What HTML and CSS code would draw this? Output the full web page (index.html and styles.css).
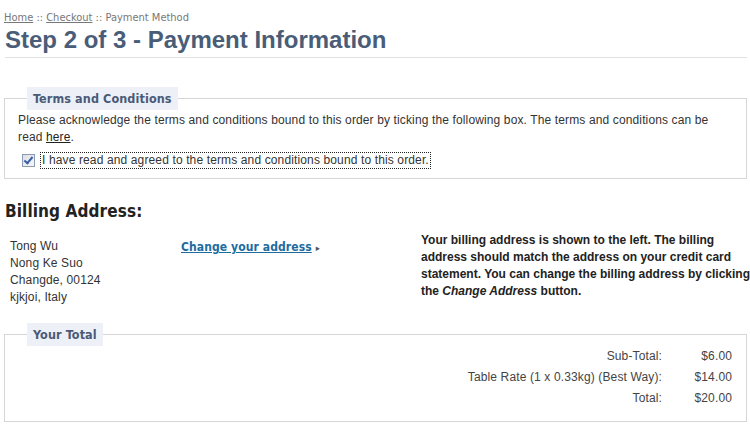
FILE: index.html
```html
<!DOCTYPE html>
<html lang="en">
<head>
  <meta charset="UTF-8" />
  <title>Step 2 of 3 - Payment Information</title>
  <link rel="stylesheet" href="styles.css">
</head>
<body>
  <div class="page">
    <div class="crumbs"><a href="#">Home</a> :: <a href="#">Checkout</a> :: Payment Method</div>
    <h1>Step 2 of 3 - Payment Information</h1>

    <fieldset class="box terms">
      <legend>Terms and Conditions</legend>
      <p>Please acknowledge the terms and conditions bound to this order by ticking the following box. The terms and conditions can be read <a href="#">here</a>.</p>
      <label class="agree"><input type="checkbox" checked /><span>I have read and agreed to the terms and conditions bound to this order.</span></label>
    </fieldset>

    <h2>Billing Address:</h2>
    <div class="billing">
      <address>Tong Wu<br>Nong Ke Suo<br>Changde, 00124<br>kjkjoi, Italy</address>
      <div class="change"><a href="#">Change your address</a> <span class="arrow">&#9656;</span></div>
      <p class="note">Your billing address is shown to the left. The billing address should match the address on your credit card statement. You can change the billing address by clicking the <em>Change Address</em> button.</p>
    </div>

    <fieldset class="box total">
      <legend>Your Total</legend>
      <table class="sums">
        <tr><td class="lbl">Sub-Total:</td><td class="amt">$6.00</td></tr>
        <tr><td class="lbl">Table Rate (1 x 0.33kg) (Best Way):</td><td class="amt">$14.00</td></tr>
        <tr><td class="lbl">Total:</td><td class="amt">$20.00</td></tr>
      </table>
    </fieldset>
  </div>
</body>
</html>
```

FILE: styles.css
```css
body {
  margin: 0;
  background: #fff;
  font-family: 'Liberation Sans', Arial, sans-serif;
  font-size: 12px;
  letter-spacing: 0.13px;
  color: #333;
}

.page {
  padding: 11px 3px 0 4px;
}

/* fil d'ariane */
.crumbs {
  font-family: 'DejaVu Sans Condensed', 'DejaVu Sans', sans-serif;
  font-size: 11px;
  letter-spacing: 0;
  color: #777;
  line-height: 14px;
}
.crumbs a {
  color: #777;
}

h1 {
  font-family: 'Liberation Sans', Arial, sans-serif;
  font-size: 24px;
  font-weight: 700;
  letter-spacing: 0;
  color: #4a5d78;
  margin: 1px 0 0 1px;
  padding-bottom: 3px;
  line-height: 28px;
  border-bottom: 1px solid #e2e2e2;
}

.box {
  border: 1px solid #d6d6d6;
  margin: 0;
  padding: 2px 20px 10px 13px;
}
.box legend {
  font-family: 'DejaVu Sans Condensed', 'DejaVu Sans', sans-serif;
  font-weight: 700;
  font-size: 12.5px;
  letter-spacing: 0.1px;
  color: #4a5a78;
  background: #edf0f6;
  padding: 4px 6px 4px;
  margin-left: 9px;
}

.terms {
  margin-top: 29px;
}
.terms p {
  margin: 0;
  line-height: 17px;
}
.terms a {
  color: #222;
}
.agree {
  display: flex;
  align-items: center;
  margin: 7px 0 0 4px;
}
.agree input {
  appearance: none;
  -webkit-appearance: none;
  position: relative;
  margin: 0 6px 0 0;
  width: 13px;
  height: 13px;
  border: 1px solid #8a9bb3;
  background: linear-gradient(135deg, #dcdfe4, #f7f7f7);
  box-sizing: border-box;
}
.agree input:checked::after {
  content: "";
  position: absolute;
  left: 3px;
  top: 0px;
  width: 3px;
  height: 7px;
  border: solid #3a5ea8;
  border-width: 0 2px 2px 0;
  transform: rotate(40deg);
}
.agree span {
  outline: 1px dotted #222;
  padding: 0 1px;
  line-height: 15px;
}

h2 {
  font-family: 'DejaVu Sans Condensed', 'DejaVu Sans', sans-serif;
  font-size: 17px;
  font-weight: 700;
  letter-spacing: 0.1px;
  color: #222;
  margin: 20px 0 0 1px;
  line-height: 24px;
}

.billing {
  display: grid;
  grid-template-columns: 177px 240px 1fr;
  margin-top: 8px;
  line-height: 17px;
}
.billing address {
  font-style: normal;
  padding: 7px 0 0 6px;
}
.change {
  padding-top: 8px;
  font-family: 'DejaVu Sans Condensed', 'DejaVu Sans', sans-serif;
  font-size: 12px;
  font-weight: 700;
  letter-spacing: 0.1px;
}
.change a {
  color: #1c6c9f;
}
.change .arrow {
  font-size: 9px;
  color: #555;
}
.note {
  margin: 0 -8px 0 0;
  padding-top: 1px;
  font-weight: 700;
  letter-spacing: 0;
  color: #222;
}

.total {
  margin-top: 17px;
  padding-top: 0;
  padding-bottom: 12px;
}
.sums {
  margin-left: auto;
  margin-right: -6px;
  border-collapse: collapse;
  color: #444;
}
.sums td {
  padding: 0;
  line-height: 21px;
  text-align: right;
}
.sums .amt {
  width: 70px;
}
```
